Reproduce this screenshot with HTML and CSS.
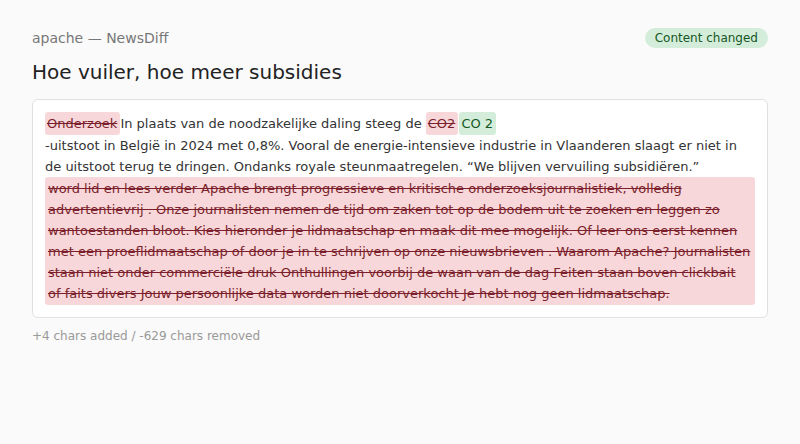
FILE: index.html
```html
<!DOCTYPE html>
<html lang="nl">
<head>
<meta charset="utf-8">
<title>apache — NewsDiff</title>
<link rel="stylesheet" href="styles.css">
</head>
<body>
<main class="page">
  <header class="top">
    <span class="source">apache — NewsDiff</span>
    <span class="badge">Content changed</span>
  </header>
  <h1 class="title">Hoe vuiler, hoe meer subsidies</h1>
  <section class="card">
    <p class="diff"><span class="del">Onderzoek</span>In plaats van de noodzakelijke daling steeg de <span class="del">CO2</span><span class="ins">CO 2</span><br>-uitstoot in België in 2024 met 0,8%. Vooral de energie-intensieve industrie in Vlaanderen slaagt er niet in de uitstoot terug te dringen. Ondanks royale steunmaatregelen. “We blijven vervuiling subsidiëren.” <span class="del block">word lid en lees verder Apache brengt progressieve en kritische onderzoeksjournalistiek, volledig advertentievrij . Onze journalisten nemen de tijd om zaken tot op de bodem uit te zoeken en leggen zo wantoestanden bloot. Kies hieronder je lidmaatschap en maak dit mee mogelijk. Of leer ons eerst kennen met een proeflidmaatschap of door je in te schrijven op onze nieuwsbrieven . Waarom Apache? Journalisten staan niet onder commerciële druk Onthullingen voorbij de waan van de dag Feiten staan boven clickbait of faits divers Jouw persoonlijke data worden niet doorverkocht Je hebt nog geen lidmaatschap.</span></p>
  </section>
  <p class="stats">+4 chars added / -629 chars removed</p>
</main>
</body>
</html>
```
FILE: styles.css
```css
html, body {
  margin: 0;
  padding: 0;
  background: #fafafa;
  font-family: "DejaVu Sans", sans-serif;
  color: #333;
}

.page {
  padding: 28px 32px 0;
}

.top {
  display: flex;
  justify-content: space-between;
  align-items: center;
}

.source {
  font-size: 14px;
  color: #777;
}

.badge {
  font-size: 12px;
  line-height: 14px;
  padding: 3px 10px;
  border-radius: 10px;
  background: #d4edda;
  color: #155724;
}

.title {
  margin: 12px 0 15px;
  font-size: 20px;
  line-height: 24px;
  font-weight: normal;
  color: #222;
}

.card {
  background: #fff;
  border: 1px solid #e0e0e0;
  border-radius: 6px;
  padding: 12px 12px;
}

.diff {
  margin: 0;
  font-size: 13px;
  line-height: 21px;
  color: #333;
}

.del, .ins {
  display: inline-block;
  padding: 1px 3px 1px 2px;
  border-radius: 3px;
  line-height: 21px;
}

.del {
  background: #f8d7da;
  color: #7a1f2b;
  text-decoration: line-through;
}

.ins {
  background: #d4edda;
  color: #155724;
  margin-left: 1px;
}

.del.block {
  padding: 1px 3px;
}

.stats {
  margin: 11px 0 0;
  font-size: 12px;
  color: #999;
}
```
